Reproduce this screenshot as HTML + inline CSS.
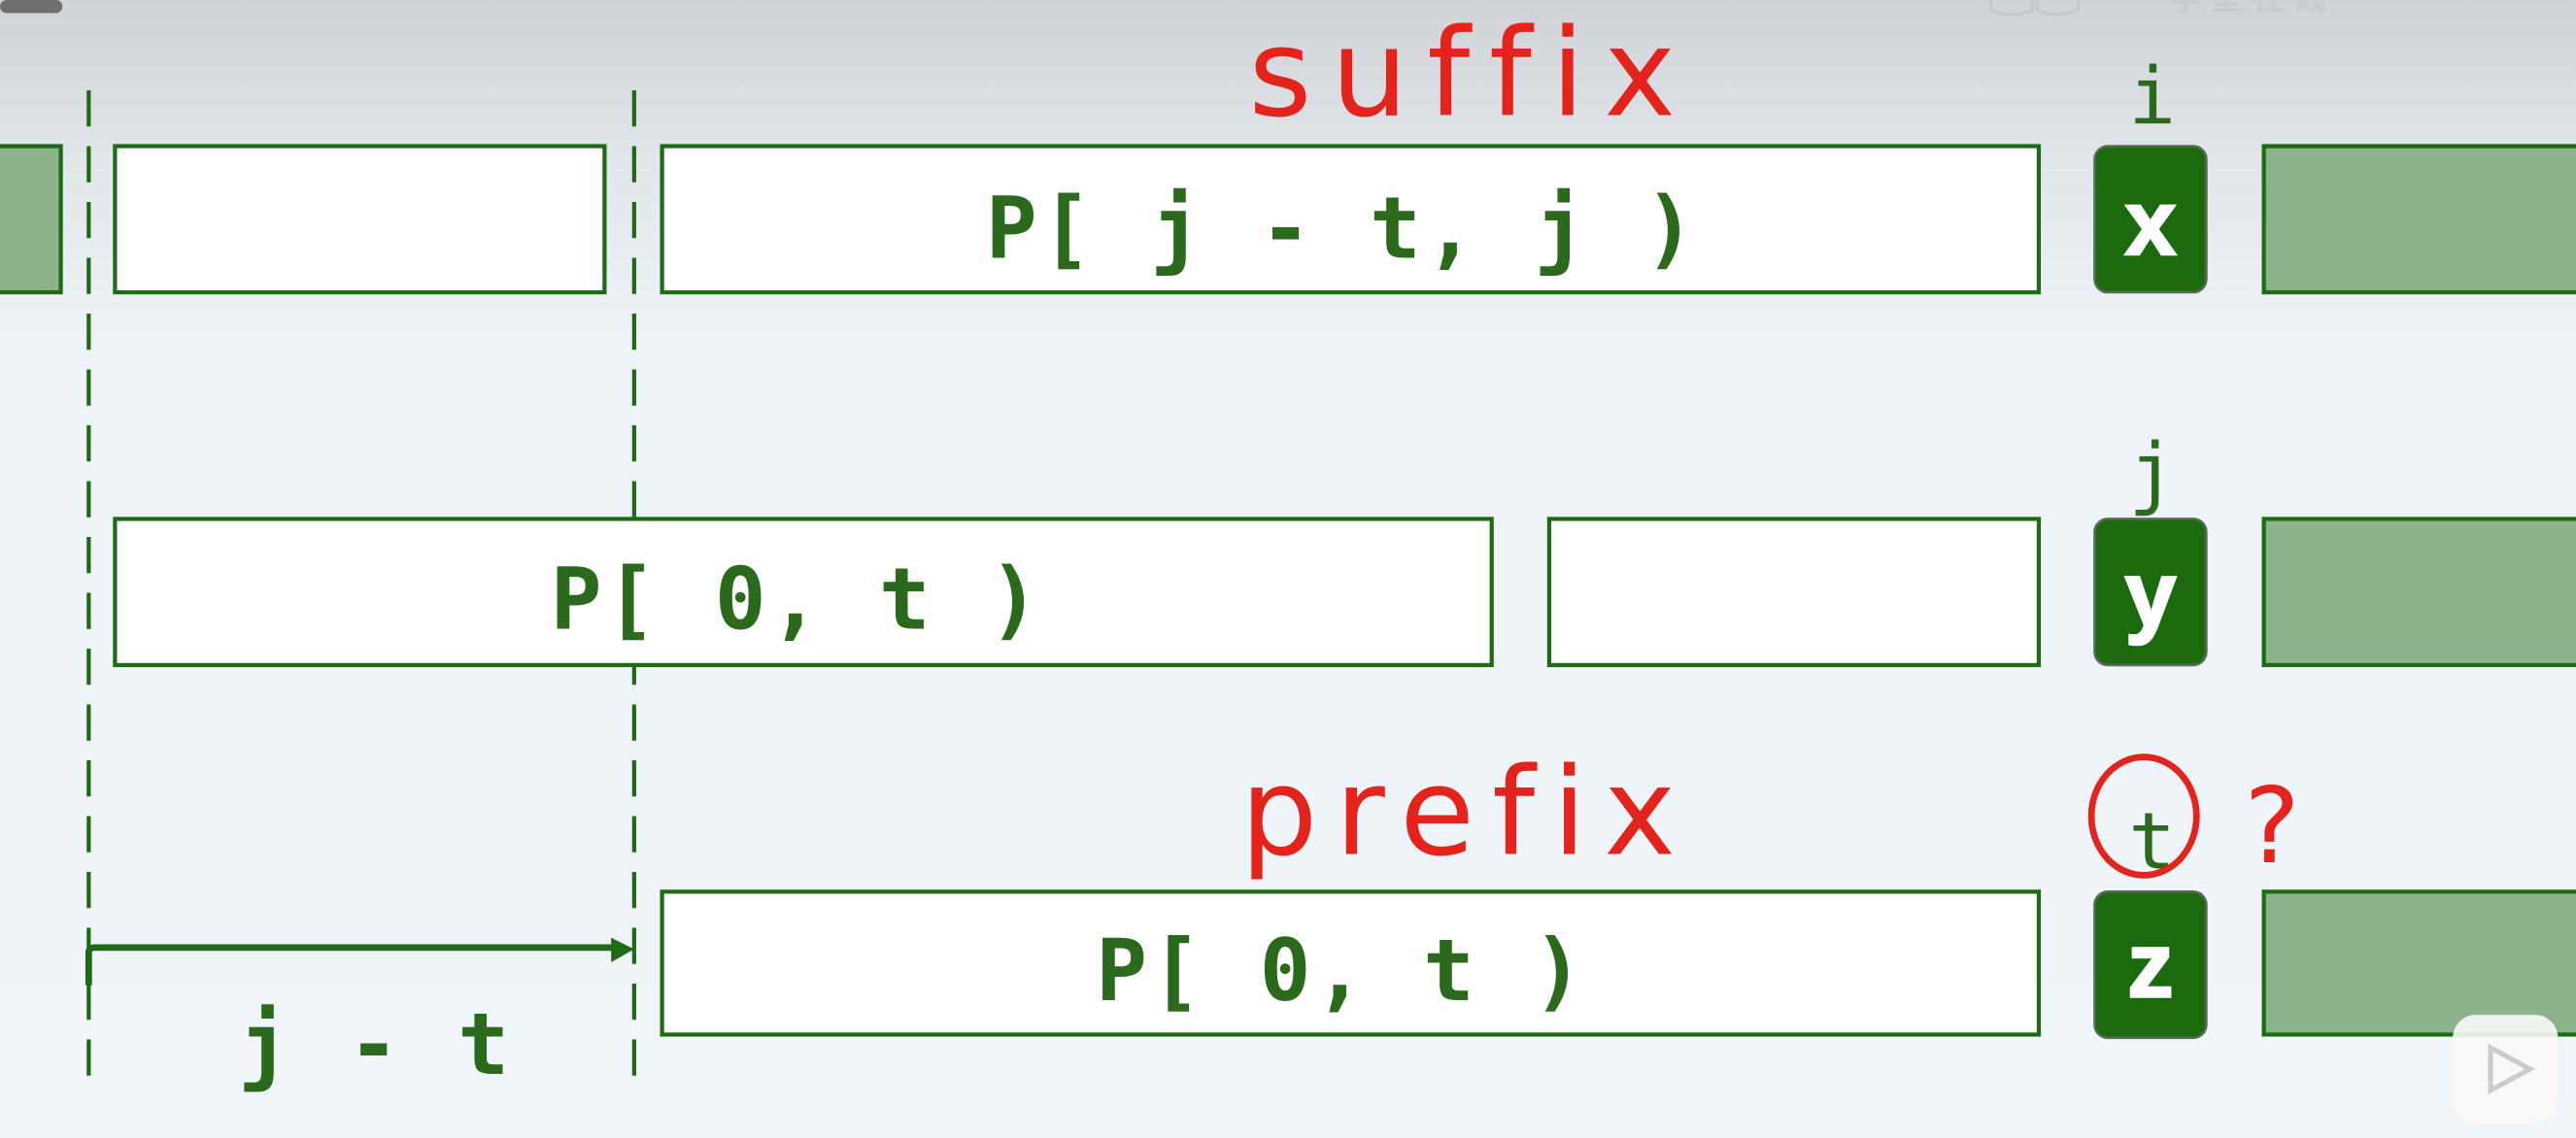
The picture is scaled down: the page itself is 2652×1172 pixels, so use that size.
<!DOCTYPE html>
<html><head><meta charset="utf-8"><style>
html,body{margin:0;padding:0;width:2652px;height:1172px;overflow:hidden;background:#eef3f8}
svg{display:block}
text{font-variant-ligatures:none;font-feature-settings:"liga" 0,"clig" 0}
</style></head><body>
<svg width="2652" height="1172" viewBox="0 0 1568 693" preserveAspectRatio="none">
<defs>
<linearGradient id="bg" x1="0" y1="0" x2="0" y2="1">
<stop offset="0" stop-color="#cfd3d8"/><stop offset="0.15" stop-color="#e2e7ec"/><stop offset="0.3" stop-color="#eef3f8"/><stop offset="1" stop-color="#f0f5f9"/>
</linearGradient>
</defs>
<rect width="1568" height="693" fill="url(#bg)"/>
<rect x="0" y="0" width="38" height="8" rx="4" fill="#6f6f70"/>
<g fill="none" stroke="#c5c9ce" stroke-width="2">
<path d="M1212 0 v6 q10 6 25 0 v-6 M1240 0 v6 q10 6 25 0 v-6"/>
</g>
<g fill="#c7cbd0" font-family="Liberation Sans, Noto Sans CJK SC, sans-serif" font-size="20" font-weight="bold"><text x="1320" y="6">学 堂 在 线</text></g>
<g stroke="#1f6a14" stroke-width="2.5" stroke-dasharray="22 12" fill="none">
<line x1="54" y1="55" x2="54" y2="660"/>
<line x1="386" y1="55" x2="386" y2="660"/>
</g>
<g stroke="#1f6a14" stroke-width="2.5">
<rect x="-5" y="89" width="42" height="89" fill="#8db38a"/>
<rect x="70" y="89" width="298" height="89" fill="#fff"/>
<rect x="403" y="89" width="838" height="89" fill="#fff"/>
<rect x="1378" y="89" width="200" height="89" fill="#8db38a"/>
<rect x="70" y="316" width="838" height="89" fill="#fff"/>
<rect x="943" y="316" width="298" height="89" fill="#fff"/>
<rect x="1378" y="316" width="200" height="89" fill="#8db38a"/>
<rect x="403" y="543" width="838" height="87" fill="#fff"/>
<rect x="1378" y="543" width="200" height="87" fill="#8db38a"/>
</g>
<g fill="#1b6a0e" stroke="#5a6a58" stroke-width="1.5">
<rect x="1275" y="89" width="68" height="89" rx="8"/>
<rect x="1275" y="316" width="68" height="89" rx="8"/>
<rect x="1275" y="543" width="68" height="89" rx="8"/>
</g>
<g fill="#fff" font-family="Liberation Sans, sans-serif" font-weight="bold" font-size="56" text-anchor="middle" stroke="#fff" stroke-width="1.5">
<text x="1309" y="155">x</text><text x="1309" y="381">y</text><text x="1309" y="607">z</text>
</g>
<g fill="#2b6a1c" font-family="DejaVu Sans Mono, Liberation Mono, monospace" font-weight="bold" font-size="52">
<text x="600" y="157" textLength="432" lengthAdjust="spacing">P[ j - t, j )</text>
<text x="335" y="383" textLength="298" lengthAdjust="spacing">P[ 0, t )</text>
<text x="667" y="609" textLength="297" lengthAdjust="spacing">P[ 0, t )</text>
<text x="145" y="654" textLength="165" lengthAdjust="spacing">j - t</text>
</g>
<g fill="#2b6a1c" font-family="DejaVu Sans Mono, Liberation Mono, monospace" font-size="48" text-anchor="middle">
<text x="1310" y="75">i</text><text x="1310" y="304">j</text><text x="1310" y="529">t</text>
</g>
<path d="M54 600 V580 Q54 577 58 577 H375" stroke="#1f6a14" stroke-width="4" fill="none"/>
<path d="M372 571 L386 578 L372 586 Z" fill="#1f6a14"/>
<g fill="none" stroke="#e3231c" stroke-width="4" stroke-linecap="round">
<ellipse cx="1305" cy="497" rx="32" ry="36"/>
</g>
<g fill="#e3231c" font-family="DejaVu Sans, sans-serif" font-weight="normal" font-size="74">
<text x="760" y="70" textLength="260" lengthAdjust="spacing">suffix</text>
<text x="755" y="520" textLength="265" lengthAdjust="spacing">prefix</text>
<text x="1366" y="525" font-size="64">?</text>
</g>
<rect x="1493" y="618" width="64" height="66" rx="14" fill="#fafafa" opacity="0.9"/>
<path d="M1516 638 L1540 651 L1516 664 Z" fill="none" stroke="#ccc" stroke-width="3"/>
</svg>
</body></html>
